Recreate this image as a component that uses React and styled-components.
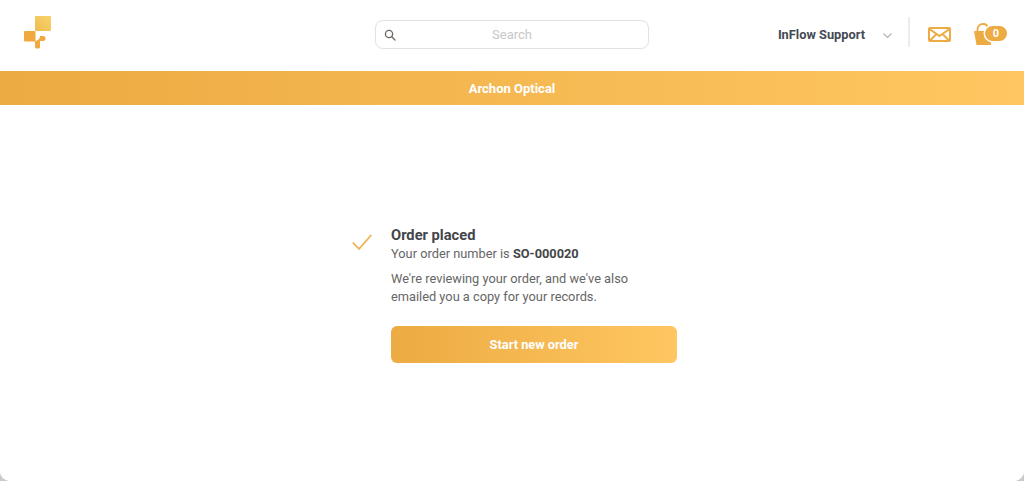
import React from "react";
import styled, { createGlobalStyle } from "styled-components";

const Global = createGlobalStyle`
  html, body { margin: 0; padding: 0; height: 100%; background: #c9c9c9; overflow: hidden; }
  body { font-family: Roboto, "Liberation Sans", sans-serif; }
  #root { height: 100%; }
`;
const Page = styled.div`
  height: 481px; display: flex; flex-direction: column; background: #fff;
  border-radius: 0 0 10px 10px; overflow: hidden;
`;
const Header = styled.header`
  height: 71px; flex: none; display: grid; grid-template-columns: 1fr 274px 1fr; align-items: center;
`;
const LogoCell = styled.div`
  padding: 0 0 6px 24px; display: flex; align-items: center;
`;
const SearchBox = styled.div`
  height: 29px; box-sizing: border-box; border: 1px solid #e2e2e2; border-radius: 8px;
  display: flex; align-items: center; margin-bottom: 2px;
  padding: 0 8px; box-shadow: 0 0 1px rgba(0,0,0,.06);
`;
const SearchText = styled.span`
  flex: 1; text-align: center; font-size: 13px; color: #c8c8c8; padding-right: 12px;
`;
const Right = styled.div`
  display: flex; align-items: center; justify-content: flex-end; padding-right: 17px; height: 100%;
`;
const UserName = styled.span`
  font-size: 12.8px; font-weight: 700; color: #454a54; margin: 0 18px 2px 0;
`;
const Divider = styled.span`
  width: 2px; height: 30px; background: #ececec; margin: 0 18px 7px 16px;
`;
const MailIcon = styled.span`
  display: flex; align-items: center; margin: 0 23px 2px 0;
`;
const BagWrap = styled.span`
  display: flex; width: 33px; height: 22px; position: relative; margin-bottom: 3px;
`;
const Badge = styled.span`
  position: absolute; left: 11px; top: 3px; width: 22px; height: 15px; border-radius: 8px;
  background: #ecab43; box-shadow: 0 0 0 1.5px #fff; color: #fff; font-size: 11px; font-weight: 700;
  display: flex; align-items: center; justify-content: center;
`;
const Banner = styled.div`
  height: 34px; flex: none; display: flex; align-items: center; justify-content: center;
  background: linear-gradient(90deg, #ecab43, #ffc661); color: #fff; font-size: 13px; font-weight: 700;
`;
const Main = styled.main`
  flex: 1; display: flex; justify-content: center; padding: 121px 0 0 5px; align-items: flex-start; background: #fff;
`;
const Confirm = styled.div`
  display: flex; gap: 19px;
`;
const CheckCell = styled.div`
  width: 20px; padding-top: 8px;
`;
const Body = styled.div`
  width: 286px; display: flex; flex-direction: column;
`;
const Title = styled.h1`
  margin: 0 0 1px; font-size: 14.7px; line-height: 18px; font-weight: 700; color: #44464a;
`;
const Line = styled.p`
  margin: 0; font-size: 12.8px; line-height: 18px; color: #666;
  & strong { color: #44464a; font-weight: 700; }
`;
const Para = styled(Line)`
  margin-top: 7px; width: 260px;
`;
const Button = styled.button`
  margin-top: 20px; height: 37px; width: 286px; border: 0; border-radius: 6px;
  background: linear-gradient(90deg, #ecab43, #ffc661); color: #fff; font: 700 12.8px Roboto, sans-serif;
`;

export default function App() {
  return (
    <>
      <Global />
      <Page>
        <Header>
          <LogoCell>
            <svg width="28" height="33" viewBox="0 0 28 33">
              <defs>
                <linearGradient id="lg" x1="0" y1="1" x2="1" y2="0">
                  <stop offset="0" stopColor="#f0bb50" />
                  <stop offset="1" stopColor="#f7d46c" />
                </linearGradient>
              </defs>
              <rect x="11" y="0" width="16" height="15" rx="1" fill="url(#lg)" />
              <rect x="0" y="15" width="11.500" height="10.500" rx="1" fill="#efa93f" />
              <path d="M11 25v6a1.500 1.500 0 0 0 1.500 1.500h2a1.500 1.500 0 0 0 1.500-1.500v-6h3a2.500 2.500 0 0 0 0-5h-3A5 5 0 0 1 11 25z" fill="#efa93f" />
            </svg>
          </LogoCell>
          <SearchBox>
            <svg width="12" height="12" viewBox="0 0 12 12" fill="none" stroke="#6b6460" strokeWidth="1.3">
              <circle cx="5" cy="5" r="3.6" />
              <path d="M7.8 7.8 11 11" strokeLinecap="round" />
            </svg>
            <SearchText>Search</SearchText>
          </SearchBox>
          <Right>
            <UserName>InFlow Support</UserName>
            <svg width="9" height="5" viewBox="0 0 9 5" fill="none" stroke="#b4b7bd" strokeWidth="1.300">
              <path d="M.5.5 4.500 4.500 8.500.5" />
            </svg>
            <Divider />
            <MailIcon>
              <svg width="23" height="15" viewBox="0 0 23 15" fill="none" stroke="#ecab43" strokeWidth="2">
                <rect x="1" y="1" width="21" height="13" rx="1" />
                <path d="M1.500 2 11.500 9 21.500 2M2 13.500 8.500 7M21 13.500 14.500 7" />
              </svg>
            </MailIcon>
            <BagWrap>
              <svg width="20" height="22" viewBox="0 0 20 22">
                <path d="M3.500 9V6.500C3.500 3 6 1 9 1s5 2 5.500 5" fill="none" stroke="#ecab43" strokeWidth="1.800" />
                <path d="M0 8H16.500L17 22H2.500z" fill="#ecab43" />
              </svg>
              <Badge>0</Badge>
            </BagWrap>
          </Right>
        </Header>
        <Banner>Archon Optical</Banner>
        <Main>
          <Confirm>
            <CheckCell>
              <svg width="20" height="17" viewBox="0 0 20 17" fill="none" stroke="#f0b050" strokeWidth="1.800">
                <path d="M.8 8.500 7 15 19.300 1" />
              </svg>
            </CheckCell>
            <Body>
              <Title>Order placed</Title>
              <Line>Your order number is <strong>SO-000020</strong></Line>
              <Para>We're reviewing your order, and we've also emailed you a copy for your records.</Para>
              <Button>Start new order</Button>
            </Body>
          </Confirm>
        </Main>
      </Page>
    </>
  );
}
